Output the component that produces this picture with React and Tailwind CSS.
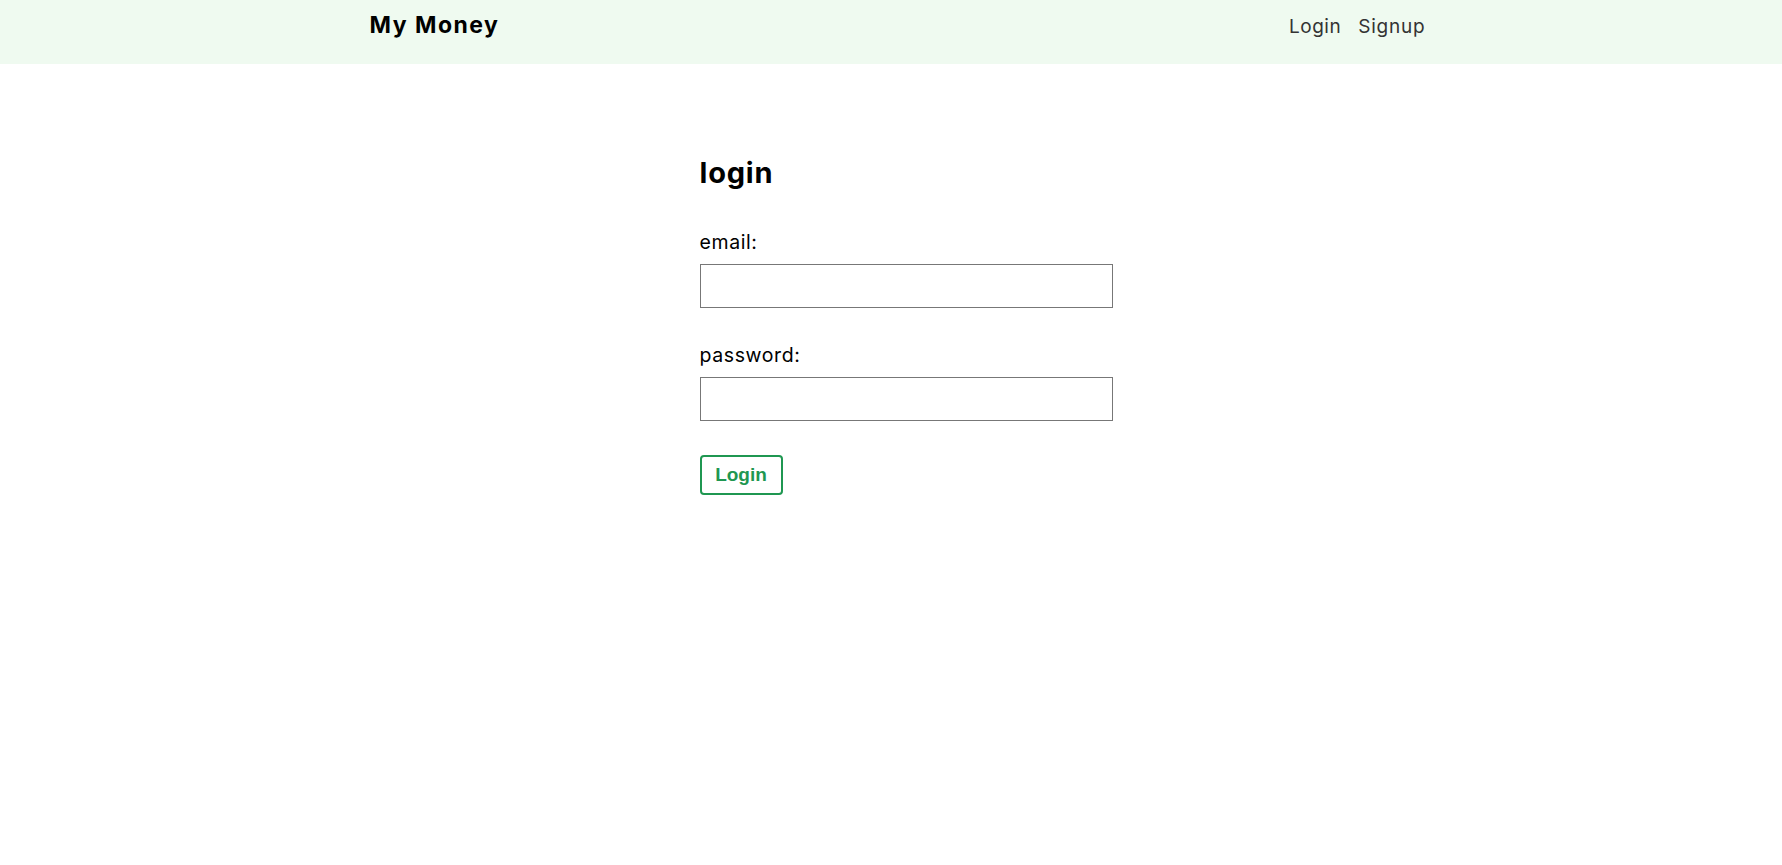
import { useState } from 'react';

function Navbar() {
  return (
    <nav className="bg-[#effaf0] h-[64px] pl-[13px]">
      <ul className="max-w-[1056px] mx-auto flex items-baseline pt-[11px] font-[Inter,sans-serif]">
        <li className="mr-auto font-bold text-[23px] leading-[28px] tracking-[1.5px] text-black">My Money</li>
        <li>
          <a href="#" className="text-[#333] text-[19px] leading-[28px] tracking-[0.5px] no-underline">Login</a>
        </li>
        <li className="ml-[17px]">
          <a href="#" className="text-[#333] text-[19px] leading-[28px] tracking-[0.8px] no-underline">Signup</a>
        </li>
      </ul>
    </nav>
  );
}

function Field({ label, type, value, onChange, className = '' }) {
  return (
    <label className={`block ${className}`}>
      <span className="block text-[19.5px] leading-[24px] tracking-[0.6px] text-black">{label}</span>
      <input
        type={type}
        value={value}
        onChange={(e) => onChange(e.target.value)}
        className="block mt-[10px] w-[413px] h-[44px] px-[7px] border border-[#777] text-[17px] text-[#777] outline-none"
      />
    </label>
  );
}

export default function App() {
  const [email, setEmail] = useState('');
  const [password, setPassword] = useState('');

  return (
    <div className="min-h-screen bg-white font-[Inter,sans-serif]">
      <Navbar />
      <div className="pl-[13px]">
        <form className="w-[396px] mx-auto mt-[91px]" onSubmit={(e) => e.preventDefault()}>
          <h2 className="text-[29px] leading-[36px] font-bold tracking-[0.8px] text-black">login</h2>
          <Field label="email:" type="email" value={email} onChange={setEmail} className="mt-[39px]" />
          <Field label="password:" type="password" value={password} onChange={setPassword} className="mt-[35px]" />
          <button
            type="submit"
            className="mt-[34px] w-[83px] h-[40px] border-2 border-[#1f9751] rounded-[4px] bg-white text-[#1f9751] font-bold text-[19px] font-['Liberation_Sans',Arial,sans-serif] cursor-pointer"
          >
            Login
          </button>
        </form>
      </div>
    </div>
  );
}
